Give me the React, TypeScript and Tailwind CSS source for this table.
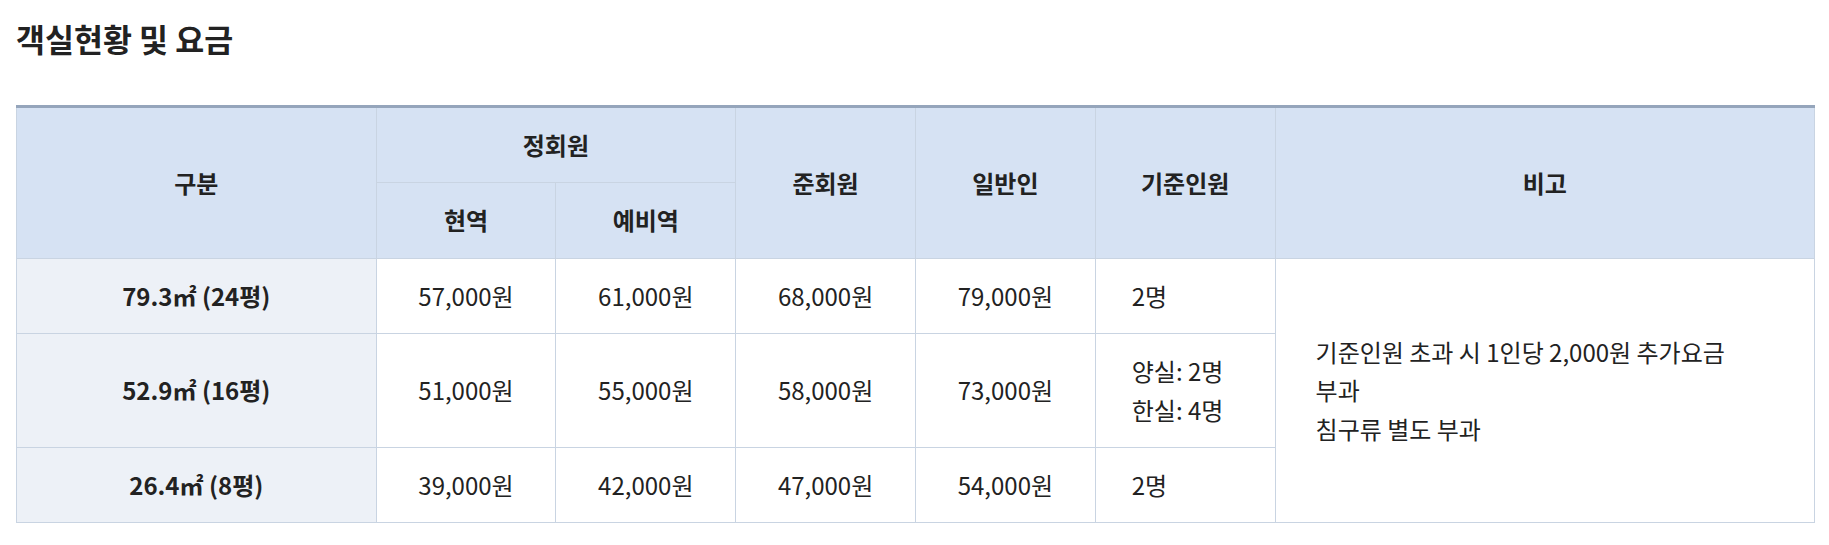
const rows = [
  { size: '79.3㎡ (24평)', active: '57,000원', reserve: '61,000원', assoc: '68,000원', general: '79,000원', people: ['2명'] },
  { size: '52.9㎡ (16평)', active: '51,000원', reserve: '55,000원', assoc: '58,000원', general: '73,000원', people: ['양실: 2명', '한실: 4명'] },
  { size: '26.4㎡ (8평)', active: '39,000원', reserve: '42,000원', assoc: '47,000원', general: '54,000원', people: ['2명'] },
]

const th = 'border border-[#c9d4e2] bg-[#d6e2f3] px-4 py-[18px] text-center font-bold'
const td = 'border border-[#c9d4e2] px-4 py-[18px] text-center'

export default function App() {
  return (
    <div
      className="min-h-screen bg-white pl-4 pr-[14px] text-[#222] text-[24px] leading-[1.6]"
      style={{ fontFamily: '"Noto Sans CJK KR", "Noto Sans", sans-serif' }}
    >
      <h2 className="pt-[15px] mb-[44px] text-[31.5px] leading-[46px] font-bold">객실현황 및 요금</h2>

      <table className="w-full table-fixed border-collapse border-t-[3px] border-t-[#95a5bb]">
        <colgroup>
          <col className="w-[20%]" />
          <col className="w-[10%]" />
          <col className="w-[10%]" />
          <col className="w-[10%]" />
          <col className="w-[10%]" />
          <col className="w-[10%]" />
          <col className="w-[30%]" />
        </colgroup>
        <thead>
          <tr>
            <th rowSpan={2} className={th}>구분</th>
            <th colSpan={2} className={th}>정회원</th>
            <th rowSpan={2} className={th}>준회원</th>
            <th rowSpan={2} className={th}>일반인</th>
            <th rowSpan={2} className={th}>기준인원</th>
            <th rowSpan={2} className={th}>비고</th>
          </tr>
          <tr>
            <th className={th}>현역</th>
            <th className={th}>예비역</th>
          </tr>
        </thead>
        <tbody>
          {rows.map((r, i) => (
            <tr key={r.size}>
              <td className={`${td} bg-[#edf1f7] font-bold`}>{r.size}</td>
              <td className={td}>{r.active}</td>
              <td className={td}>{r.reserve}</td>
              <td className={td}>{r.assoc}</td>
              <td className={td}>{r.general}</td>
              <td className="border border-[#c9d4e2] pl-9 pr-4 py-[18px] text-left">
                {r.people.map(p => (
                  <div key={p}>{p}</div>
                ))}
              </td>
              {i === 0 && (
                <td rowSpan={3} className="border border-[#c9d4e2] px-10 py-[18px] text-left align-middle break-keep">
                  기준인원 초과 시 1인당 2,000원 추가요금 부과
                  <br />
                  침구류 별도 부과
                </td>
              )}
            </tr>
          ))}
        </tbody>
      </table>
    </div>
  )
}
